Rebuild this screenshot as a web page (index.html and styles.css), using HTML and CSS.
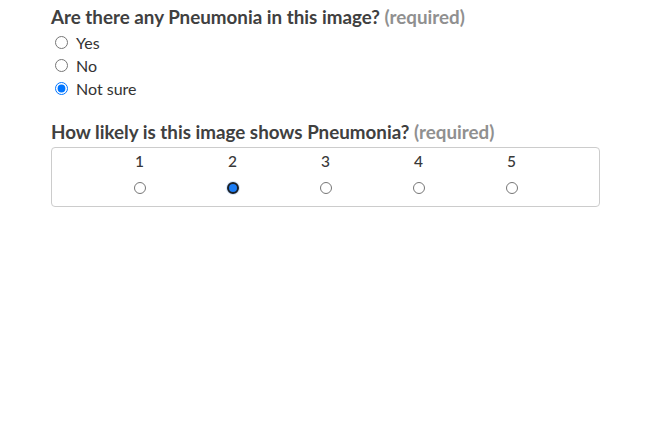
FILE: index.html
```html
<!DOCTYPE html>
<html>
<head>
<meta charset="utf-8">
<link rel="stylesheet" href="styles.css">
</head>
<body>
<div class="form">
  <div class="question">
    <div class="title">Are there any Pneumonia in this image? <span class="req">(required)</span></div>
    <div class="options">
      <label class="opt"><input type="radio" name="q1"> <span>Yes</span></label>
      <label class="opt"><input type="radio" name="q1"> <span>No</span></label>
      <label class="opt"><input type="radio" name="q1" checked> <span>Not sure</span></label>
    </div>
  </div>
  <div class="question q2">
    <div class="title">How likely is this image shows Pneumonia? <span class="req">(required)</span></div>
    <div class="scale">
      <div class="cell"><span class="num">1</span><input type="radio" name="q2" class="small"></div>
      <div class="cell"><span class="num">2</span><input type="radio" name="q2" class="small focused" checked></div>
      <div class="cell"><span class="num">3</span><input type="radio" name="q2" class="small"></div>
      <div class="cell"><span class="num">4</span><input type="radio" name="q2" class="small"></div>
      <div class="cell"><span class="num">5</span><input type="radio" name="q2" class="small"></div>
    </div>
  </div>
</div>
</body>
</html>
```
FILE: styles.css
```css
html, body {
  margin: 0;
  padding: 0;
  background: #fff;
}
body {
  font-family: Lato, "Liberation Sans", sans-serif;
  color: #404040;
}
.form {
  padding: 5px 51px 0 51px;
  width: 549px;
}
.title {
  font-size: 18.8px;
  font-weight: bold;
  line-height: 24px;
  color: #404040;
}
.req {
  color: #909090;
}
.options {
  margin-top: 2px;
}
.opt {
  display: flex;
  align-items: center;
  height: 23px;
  font-size: 16px;
  color: #333;
}
.opt input {
  margin: 0 8px 0 4px;
  width: 13px;
  height: 13px;
}
.q2 {
  margin-top: 20px;
}
.scale {
  margin-top: 3px;
  border: 1px solid #ccc;
  border-radius: 4px;
  display: grid;
  grid-template-columns: repeat(5, 1fr);
  padding: 0 41px;
  height: 58px;
}
.cell {
  display: flex;
  flex-direction: column;
  align-items: center;
}
.num {
  font-size: 15.5px;
  font-weight: 500;
  line-height: 20px;
  margin-top: 3px;
  color: #383838;
}
.small {
  margin: 11px 0 0 0;
  width: 12px;
  height: 12px;
}
.small.focused {
  appearance: none;
  -webkit-appearance: none;
  box-sizing: border-box;
  width: 12px;
  height: 12px;
  border-radius: 50%;
  border: 2px solid #1b1f24;
  background: #1a7cf5;
  box-shadow: 0 0 0 1px #d6e6fb;
}
```
